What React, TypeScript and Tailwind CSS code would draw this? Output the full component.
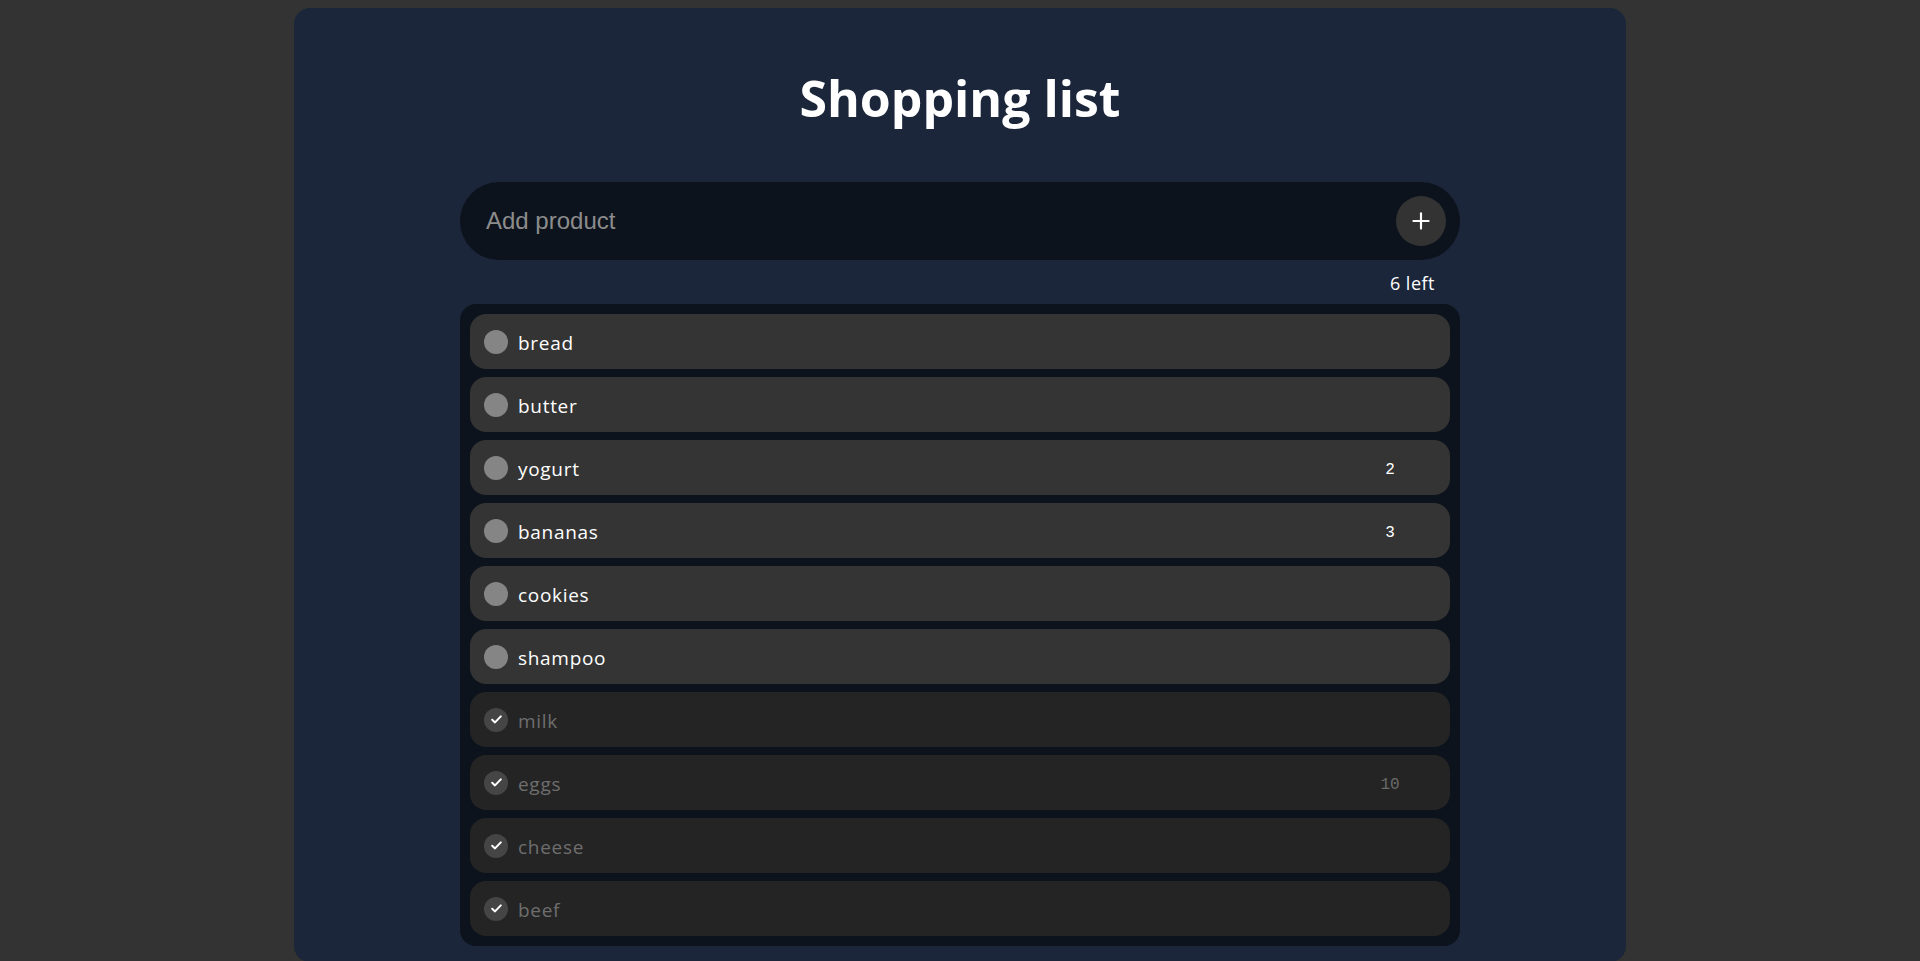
import { Plus } from "lucide-react";

type Product = {
  name: string;
  count?: number;
  done: boolean;
};

const products: Product[] = [
  { name: "bread", done: false },
  { name: "butter", done: false },
  { name: "yogurt", count: 2, done: false },
  { name: "bananas", count: 3, done: false },
  { name: "cookies", done: false },
  { name: "shampoo", done: false },
  { name: "milk", done: true },
  { name: "eggs", count: 10, done: true },
  { name: "cheese", done: true },
  { name: "beef", done: true },
];

const sans = "font-['Open_Sans','Noto_Sans',sans-serif]";

const CheckMark = () => (
  <svg width="11" height="9" viewBox="0 0 11 9" fill="none">
    <path
      d="M1.2 4.8 L4 7.4 L9.8 1.4"
      stroke="#ffffff"
      strokeWidth="2"
      strokeLinecap="round"
      strokeLinejoin="round"
    />
  </svg>
);

const ProductRow = ({ product }: { product: Product }) => {
  return (
    <div
      className={`flex items-center h-[55px] rounded-2xl pl-[14px] ${
        product.done ? "bg-[#242424]" : "bg-[#343434]"
      }`}
    >
      {product.done ? (
        <div className="flex items-center justify-center size-6 rounded-full bg-[#454545]">
          <CheckMark />
        </div>
      ) : (
        <div className="size-6 rounded-full bg-[#858585]" />
      )}
      <span
        className={`ml-[10px] flex-1 pt-[3px] text-[19px] tracking-[0.7px] ${
          product.done ? "text-[#6e6e6e]" : "text-white"
        }`}
      >
        {product.name}
      </span>
      {product.count && (
        <span
          className={`w-[40px] mr-[40px] pt-[5px] text-center text-[16px] font-['Liberation_Mono',monospace] ${
            product.done ? "text-[#6a6a6a]" : "text-white"
          }`}
        >
          {product.count}
        </span>
      )}
    </div>
  );
};

export default function App() {
  const left = products.filter((p) => !p.done).length;

  return (
    <div className={`min-h-screen bg-[#333333] pt-2 ${sans}`}>
      <div className="w-[1332px] mx-auto bg-[#1b263a] rounded-2xl pt-[62px] pb-4 flex flex-col items-center">
        <h1 className="text-[50px] leading-[56px] font-bold text-white mb-[56px]">
          Shopping list
        </h1>

        <div className="w-[1000px] h-[78px] rounded-full bg-[#0d131c] flex items-center pl-[26px] pr-[14px]">
          <input
            type="text"
            placeholder="Add product"
            className="flex-1 bg-transparent outline-none text-[24px] text-white placeholder:text-[#8c8c8c] font-['Liberation_Sans',Arial,sans-serif]"
          />
          <button className="flex items-center justify-center size-[50px] rounded-full bg-[#333333] text-white">
            <Plus className="size-[26px]" strokeWidth={2} />
          </button>
        </div>

        <div className="w-[1000px] h-[44px] flex items-center justify-end pr-[25px] pt-[2px] text-[18px] tracking-[0.5px] text-white">
          {left} left
        </div>

        <div className="w-[1000px] bg-[#0d131c] rounded-2xl p-[10px] flex flex-col gap-2">
          {products.map((product) => (
            <ProductRow key={product.name} product={product} />
          ))}
        </div>
      </div>
    </div>
  );
}
